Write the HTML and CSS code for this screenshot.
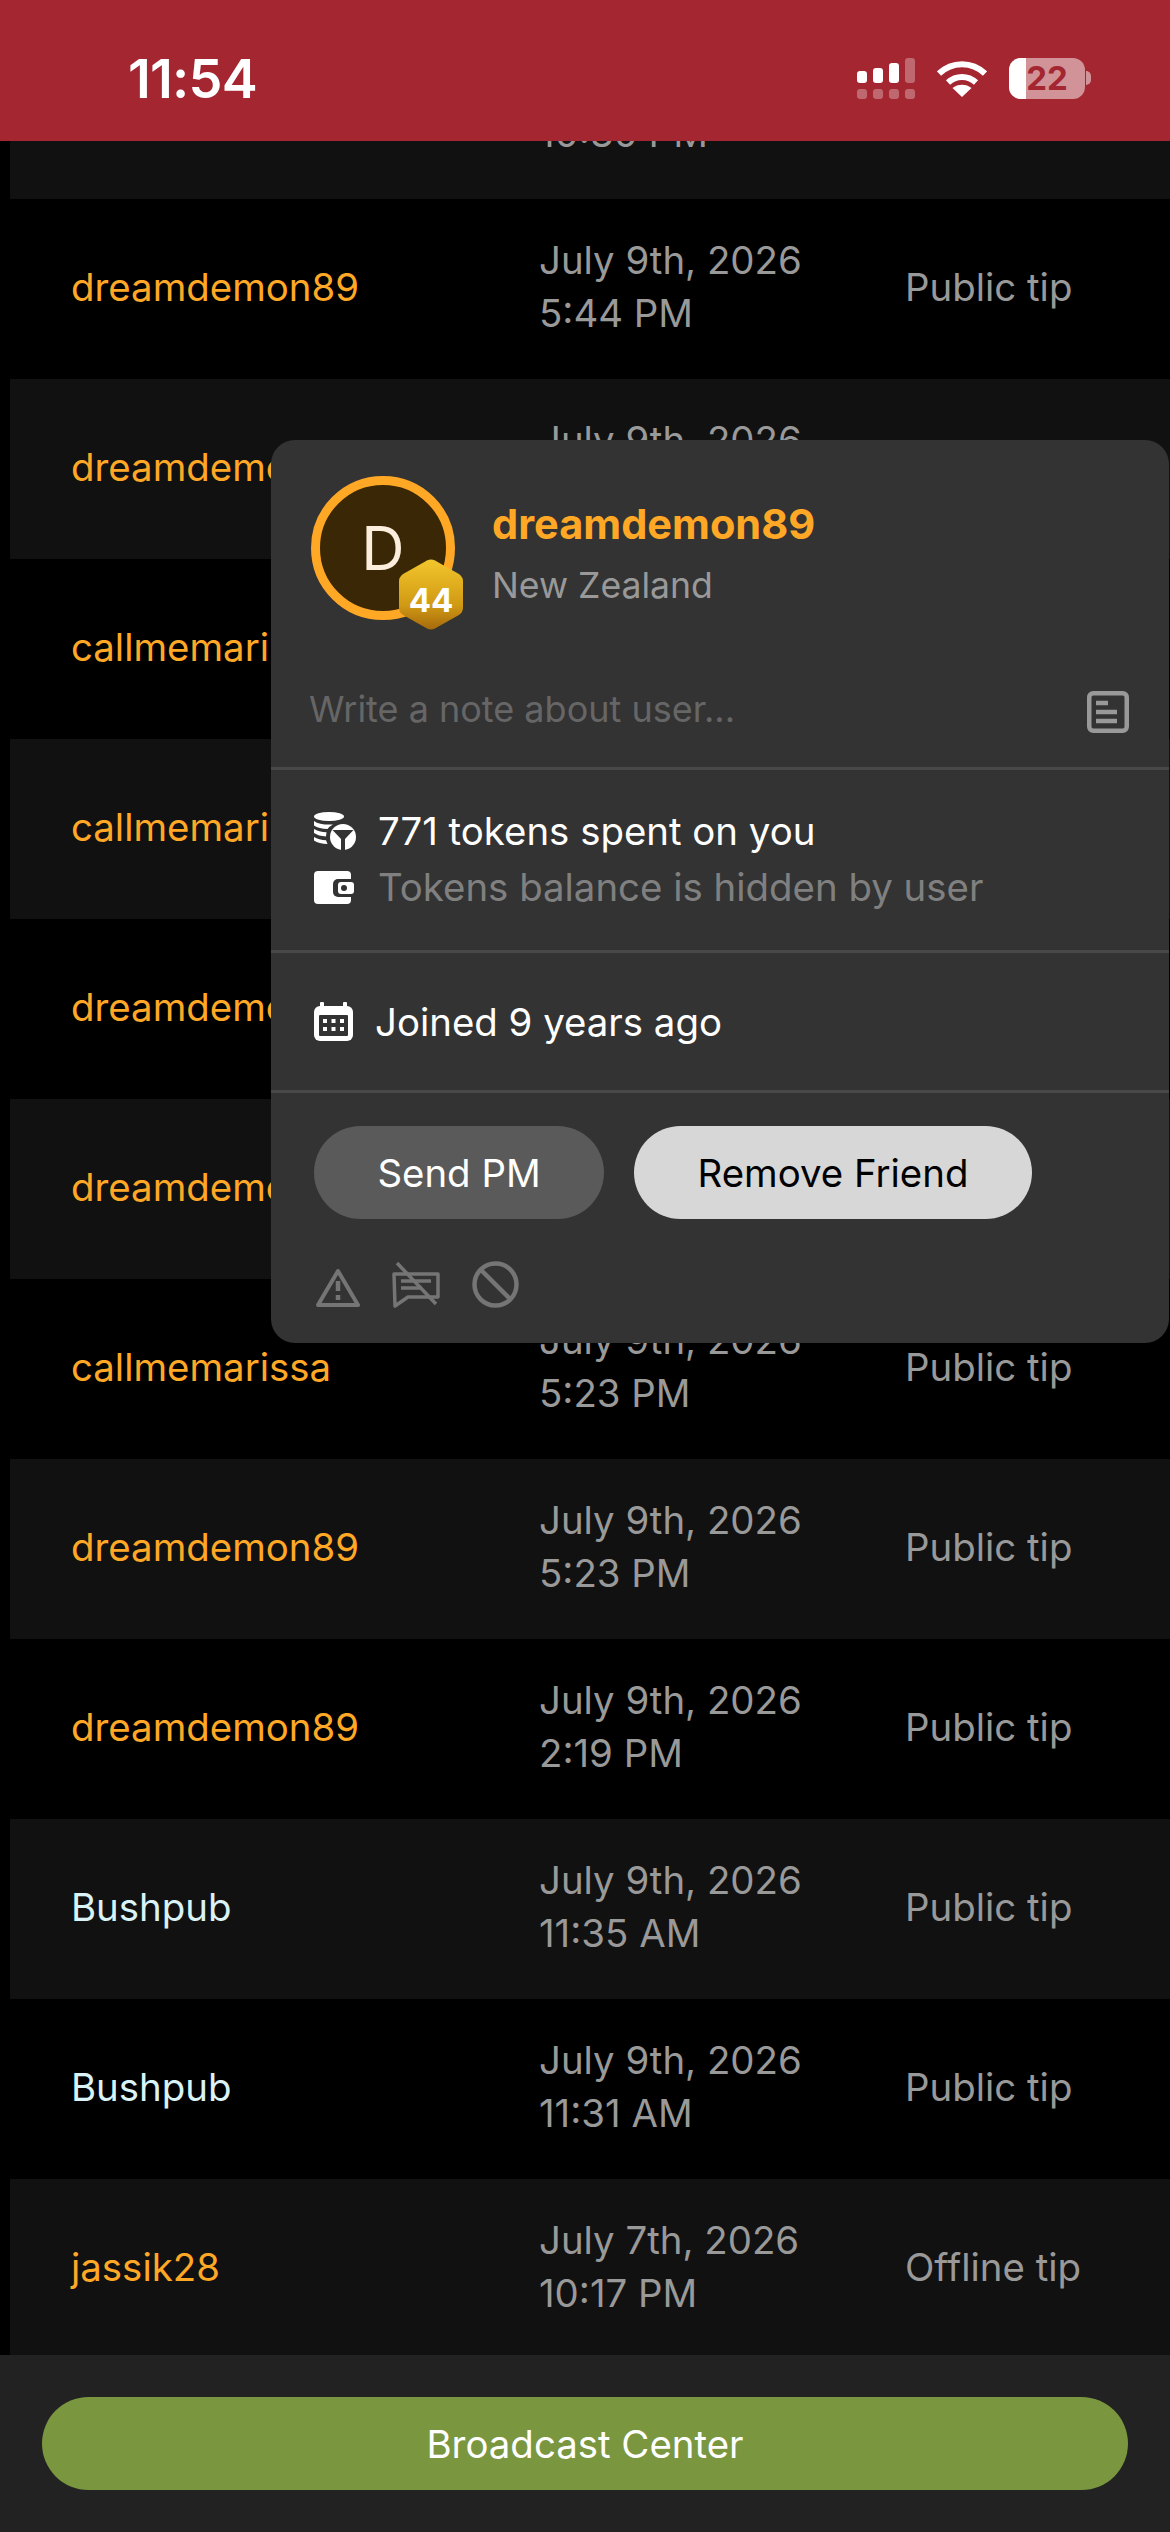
FILE: index.html
```html
<!DOCTYPE html>
<html lang="en">
  <head>
    <meta charset="UTF-8" />
    <meta name="viewport" content="width=device-width, initial-scale=1.0" />
    <title>Tips</title>
    <link rel="stylesheet" href="styles.css">
  </head>
  <body>
    <div class="screen">
      <header class="statusBar">
        <span class="clock">11:54</span>
        <div class="statusIcons">
          <svg class="signal" width="58" height="41" viewBox="0 0 58 41" fill="#fff">
            <rect x="0" y="13" width="10" height="12" rx="3" />
            <rect x="16" y="10" width="10" height="15" rx="3" />
            <rect x="32" y="5" width="10" height="20" rx="3" />
            <g opacity="0.3">
              <rect x="48" y="0" width="10" height="25" rx="3" />
              <rect x="0" y="31" width="10" height="10" rx="3" />
              <rect x="16" y="31" width="10" height="10" rx="3" />
              <rect x="32" y="31" width="10" height="10" rx="3" />
              <rect x="48" y="31" width="10" height="10" rx="3" />
            </g>
          </svg>
          <svg class="wifi" width="50" height="37" viewBox="0 0 50 37" fill="none" stroke="#fff">
            <path d="M2 13.500C15 1 35 1 48 13.500" stroke-width="6" />
            <path d="M11 22.500C19 15 31 15 39 22.500" stroke-width="6" />
            <path d="M25 37L15.500 28C20.500 23.500 29.500 23.500 34.500 28Z" fill="#fff" stroke="none" />
          </svg>
          <div class="battery">
            <div class="batteryBody">
              <div class="batteryFill"></div>
              <span class="batteryText">22</span>
            </div>
            <div class="batteryNub"></div>
          </div>
        </div>
      </header>

      <main class="list">
        <div class="rows">
          <div class="row"><span class="user"></span><span class="date">July 9th, 2026<br>10:30 PM</span><span class="kind"></span></div>
          <div class="row"><span class="user">dreamdemon89</span><span class="date">July 9th, 2026<br>5:44 PM</span><span class="kind">Public tip</span></div>
          <div class="row"><span class="user">dreamdemon89</span><span class="date">July 9th, 2026<br>5:40 PM</span><span class="kind">Public tip</span></div>
          <div class="row"><span class="user">callmemarissa</span><span class="date">July 9th, 2026<br>5:36 PM</span><span class="kind">Public tip</span></div>
          <div class="row"><span class="user">callmemarissa</span><span class="date">July 9th, 2026<br>5:35 PM</span><span class="kind">Public tip</span></div>
          <div class="row"><span class="user">dreamdemon89</span><span class="date">July 9th, 2026<br>5:31 PM</span><span class="kind">Public tip</span></div>
          <div class="row"><span class="user">dreamdemon89</span><span class="date">July 9th, 2026<br>5:27 PM</span><span class="kind">Public tip</span></div>
          <div class="row"><span class="user">callmemarissa</span><span class="date">July 9th, 2026<br>5:23 PM</span><span class="kind">Public tip</span></div>
          <div class="row"><span class="user">dreamdemon89</span><span class="date">July 9th, 2026<br>5:23 PM</span><span class="kind">Public tip</span></div>
          <div class="row"><span class="user">dreamdemon89</span><span class="date">July 9th, 2026<br>2:19 PM</span><span class="kind">Public tip</span></div>
          <div class="row"><span class="user grey">Bushpub</span><span class="date">July 9th, 2026<br>11:35 AM</span><span class="kind">Public tip</span></div>
          <div class="row"><span class="user grey">Bushpub</span><span class="date">July 9th, 2026<br>11:31 AM</span><span class="kind">Public tip</span></div>
          <div class="row"><span class="user">jassik28</span><span class="date">July 7th, 2026<br>10:17 PM</span><span class="kind">Offline tip</span></div>
        </div>
      </main>

      <footer class="footer">
        <button class="broadcastBtn" type="button">Broadcast Center</button>
      </footer>

      <section class="userCard">
        <div class="cardTop">
          <div class="profile">
            <div class="avatar">
              D
              <div class="levelBadge">
                <svg width="64" height="71" viewBox="0 0 64 71">
                  <defs>
                    <linearGradient id="badgeFill" x1="0" y1="0" x2="0" y2="1">
                      <stop offset="0" stop-color="#f3c62c" />
                      <stop offset="0.65" stop-color="#d09a14" />
                      <stop offset="1" stop-color="#a66a0c" />
                    </linearGradient>
                  </defs>
                  <path d="M28 1.500Q32 -0.500 36 1.500L59 14.500Q64 17.500 64 22V49Q64 53.500 59 56.500L36 69.500Q32 71.500 28 69.500L5 56.500Q0 53.500 0 49V22Q0 17.500 5 14.500Z" fill="url(#badgeFill)" />
                </svg>
                <span class="levelText">44</span>
              </div>
            </div>
            <div class="profileText">
              <span class="profileName">dreamdemon89</span>
              <span class="profileCountry">New Zealand</span>
            </div>
          </div>
          <div class="noteRow">
            <span class="notePlaceholder">Write a note about user...</span>
            <svg width="42" height="42" viewBox="0 0 42 42" fill="none" stroke="#999">
              <rect x="2.250" y="2.250" width="37.500" height="37.500" rx="4" stroke-width="4.500" />
              <path d="M9 12H21M9 21H30M9 30H30" stroke-width="4.500" />
            </svg>
          </div>
        </div>

        <div class="cardStats">
          <div class="statRow">
            <svg width="42" height="38" viewBox="0 0 42 38" fill="#fff">
              <ellipse cx="15" cy="4.500" rx="15" ry="4.500" />
              <path d="M0 9C4 12 11 13 19 12.500C16 14 14.500 15.500 13.500 17C8 17 3 15.500 0 13.500Z" />
              <path d="M0 17C3 19 7.500 20 12.500 20.200L12 24.500C7 24.200 3 23 0 21Z" />
              <path d="M0 25C3 27 7.500 28 12 28.200L13.500 32C8 32 3 30.500 0 28.500Z" />
              <circle cx="29" cy="25" r="13" />
              <path d="M18.500 18H39.500L31 27V38H27V27Z" fill="#333" />
            </svg>
            <span class="statText">771 tokens spent on you</span>
          </div>
          <div class="statRow">
            <svg width="42" height="33" viewBox="0 0 42 33" fill="#fff">
              <rect x="0" y="0" width="37" height="33" rx="4" />
              <rect x="19" y="8" width="23" height="18" rx="5" fill="#333" />
              <rect x="24" y="11" width="16" height="12" rx="3" />
              <circle cx="30" cy="17" r="3" fill="#333" />
            </svg>
            <span class="statText muted">Tokens balance is hidden by user</span>
          </div>
        </div>

        <div class="cardJoined">
          <svg width="39" height="39" viewBox="0 0 39 39" fill="#fff">
            <rect x="6" y="0" width="4" height="8" rx="1" />
            <rect x="29" y="0" width="4" height="8" rx="1" />
            <rect x="0" y="4" width="39" height="35" rx="6" />
            <rect x="5" y="13" width="29" height="21" rx="1" fill="#333" />
            <rect x="9" y="17" width="4" height="4" />
            <rect x="17.500" y="17" width="4" height="4" />
            <rect x="26" y="17" width="4" height="4" />
            <rect x="9" y="25" width="4" height="4" />
            <rect x="17.500" y="25" width="4" height="4" />
            <rect x="26" y="25" width="4" height="4" />
          </svg>
          <span class="statText">Joined 9 years ago</span>
        </div>

        <div class="cardActions">
          <div class="actionBtns">
            <button class="pill pillDark" type="button">Send PM</button>
            <button class="pill pillLight" type="button">Remove Friend</button>
          </div>
          <div class="actionIcons">
            <svg width="44" height="40" viewBox="0 0 44 40" fill="none" stroke="#757575" stroke-width="4" stroke-linejoin="round">
              <path d="M22 3L42 37H2Z" />
              <path d="M22 13V23M22 27V32" stroke-width="4.500" />
            </svg>
            <svg class="iconChat" width="48" height="46" viewBox="0 0 48 46" fill="none" stroke="#757575" stroke-width="3.500" stroke-linejoin="round">
              <path d="M2 12H46V35H16L3 44Z" />
              <path d="M9 19H39M9 26H30" />
              <path d="M5 1L44 42" />
            </svg>
            <svg class="iconBan" width="47" height="47" viewBox="0 0 47 47" fill="none" stroke="#757575" stroke-width="4.500">
              <circle cx="23.500" cy="23.500" r="21" />
              <path d="M9 9L38 38" />
            </svg>
          </div>
        </div>
      </section>
    </div>
  </body>
</html>
```

FILE: styles.css
```css
* {
  box-sizing: border-box;
}
html,
body {
  margin: 0;
  background-color: #000;
}
body {
  font-family: Inter, 'Liberation Sans', sans-serif;
  font-size: 38.4px;
}
.screen {
  position: relative;
  width: 1170px;
  height: 2532px;
  display: flex;
  flex-direction: column;
  overflow: hidden;
}
.statusBar {
  flex: 0 0 141px;
  position: relative;
  z-index: 2;
  display: flex;
  justify-content: space-between;
  align-items: center;
  padding: 15px 79px 0 128px;
  background-color: #a32630;
  color: #fff;
}
.clock {
  font-size: 54px;
  font-weight: 600;
  letter-spacing: -0.8px;
}
.statusIcons {
  display: flex;
  align-items: center;
  gap: 22px;
}
.battery {
  display: flex;
  align-items: center;
  gap: 1px;
}
.batteryBody {
  position: relative;
  width: 76px;
  height: 41px;
  border-radius: 12px;
  background-color: rgba(255, 255, 255, 0.5);
  overflow: hidden;
  display: flex;
  align-items: center;
  justify-content: center;
}
.batteryFill {
  position: absolute;
  left: 0;
  top: 0;
  bottom: 0;
  width: 17px;
  background-color: #fff;
}
.batteryText {
  position: relative;
  font-size: 33px;
  font-weight: 700;
  color: #a32630;
}
.batteryNub {
  width: 5px;
  height: 14px;
  border-radius: 0 5px 5px 0;
  background-color: rgba(255, 255, 255, 0.5);
}
.list {
  flex: 1 1 auto;
  min-height: 0;
  overflow: hidden;
}
.rows {
  margin-top: -122px;
  padding-left: 10px;
}
.row {
  height: 180px;
  padding-bottom: 4px;
  display: flex;
  align-items: center;
}
.row:nth-child(odd) {
  background-color: #111;
}
.user {
  flex: 0 0 529px;
  padding-left: 61px;
  color: #ffa826;
}
.user.grey {
  color: #d9f3f7;
}
.date {
  flex: 0 0 366px;
  color: #999;
  line-height: 53px;
}
.kind {
  color: #999;
}
.footer {
  flex: 0 0 177px;
  padding: 42px 42px 0;
  background-color: #222;
}
.broadcastBtn {
  width: 100%;
  height: 93px;
  border: none;
  border-radius: 47px;
  background-color: #7a963f;
  color: #fff;
  font-family: inherit;
  font-size: 38.4px;
}
.userCard {
  position: absolute;
  left: 271px;
  top: 440px;
  z-index: 1;
  width: 898px;
  height: 903px;
  display: flex;
  flex-direction: column;
  border-radius: 24px;
  background-color: #333;
  color: #fff;
}
.cardTop {
  flex: 0 0 330px;
  padding: 36px 40px 0;
  border-bottom: 3px solid #484848;
  display: flex;
  flex-direction: column;
}
.profile {
  display: flex;
  align-items: center;
  gap: 37px;
}
.avatar {
  position: relative;
  width: 144px;
  height: 144px;
  border: 9px solid #ffa826;
  border-radius: 50%;
  background-color: #3a2706;
  color: #fbeedc;
  font-size: 60px;
  display: flex;
  align-items: center;
  justify-content: center;
}
.levelBadge {
  position: absolute;
  left: 79px;
  top: 74px;
  width: 64px;
  height: 71px;
  display: flex;
  align-items: center;
  justify-content: center;
}
.levelBadge svg {
  position: absolute;
  inset: 0;
}
.levelText {
  position: relative;
  top: 5px;
  color: #fff;
  font-size: 33px;
  font-weight: 700;
}
.profileText {
  display: flex;
  flex-direction: column;
  gap: 15px;
  margin-top: 9px;
}
.profileName {
  color: #ffa826;
  font-size: 41.5px;
  font-weight: 700;
}
.profileCountry {
  color: #999;
  font-size: 35.6px;
}
.noteRow {
  display: flex;
  justify-content: space-between;
  align-items: center;
  margin-top: 67px;
}
.notePlaceholder {
  margin-left: -2px;
  padding-bottom: 6px;
  color: #666;
  font-size: 36px;
}
.cardStats {
  flex: 0 0 183px;
  padding: 38px 43px 0;
  border-bottom: 3px solid #484848;
  display: flex;
  flex-direction: column;
  gap: 10px;
}
.statRow {
  height: 46px;
  display: flex;
  align-items: center;
  gap: 22px;
}
.statText {
  font-size: 38.4px;
}
.muted {
  color: #808080;
}
.cardJoined {
  flex: 0 0 140px;
  padding-left: 43px;
  border-bottom: 3px solid #484848;
  display: flex;
  align-items: center;
  gap: 22px;
}
.cardActions {
  flex: 1 1 auto;
  padding: 33px 43px 0;
}
.actionBtns {
  display: flex;
  gap: 30px;
}
.pill {
  height: 93px;
  border: none;
  border-radius: 47px;
  font-family: inherit;
  font-size: 38.4px;
}
.pillDark {
  width: 290px;
  background-color: #5a5a5a;
  color: #fff;
}
.pillLight {
  width: 398px;
  background-color: #d7d7d7;
  color: #000;
}
.actionIcons {
  display: flex;
  align-items: flex-end;
  gap: 32px;
  margin-top: 42px;
  padding-left: 2px;
}
```
